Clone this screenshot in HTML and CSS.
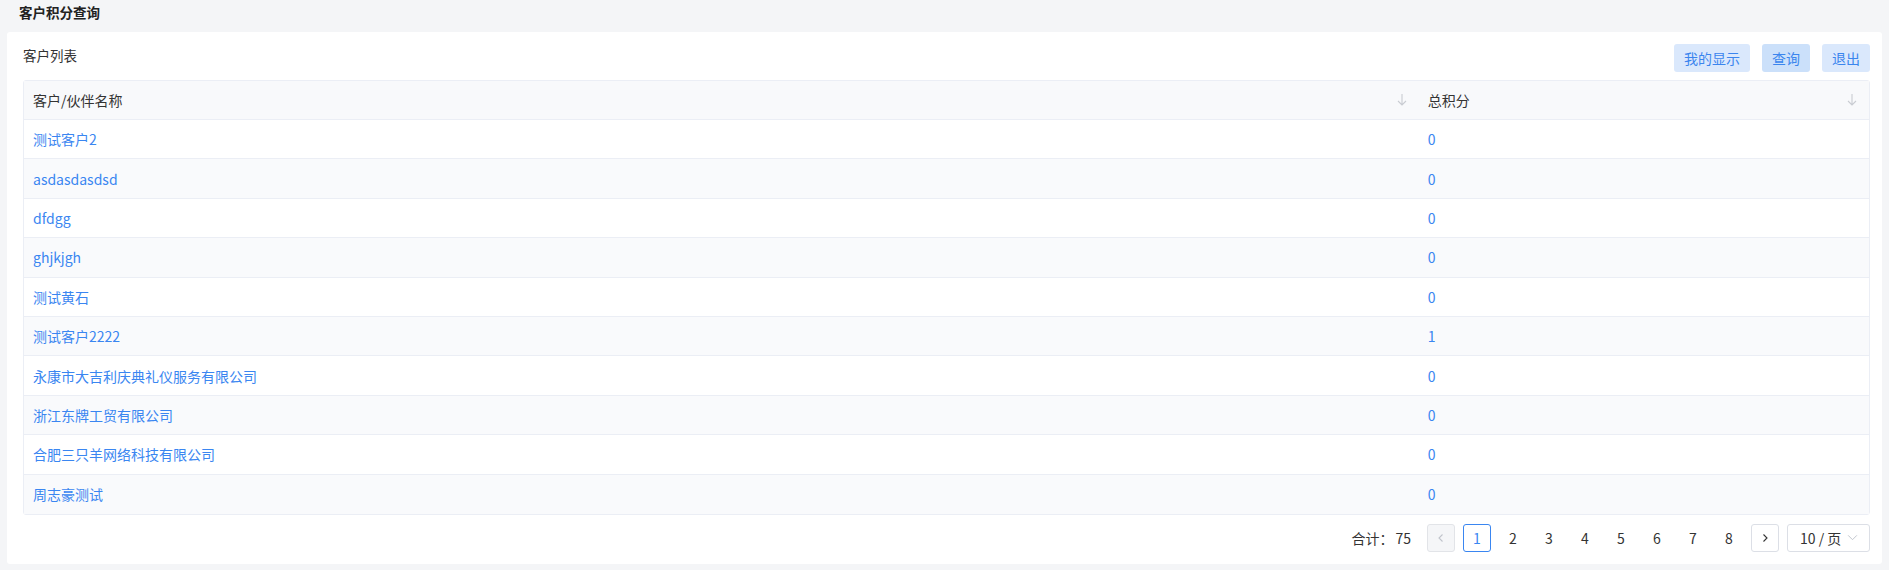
FILE: index.html
```html
<!DOCTYPE html>
<html lang="zh-CN">
<head>
<meta charset="utf-8">
<title>客户积分查询</title>
<link rel="stylesheet" href="styles.css">
</head>
<body>
<div class="page-title">客户积分查询</div>
<div class="card">
  <div class="toolbar">
    <div class="list-title">客户列表</div>
    <div class="actions">
      <button class="btn">我的显示</button>
      <button class="btn btn-active">查询</button>
      <button class="btn">退出</button>
    </div>
  </div>
  <div class="table">
    <div class="row head">
      <div class="cell">客户/伙伴名称<svg class="sort" viewBox="0 0 12 14"><path d="M6 1v11M2 8l4 4 4-4"/></svg></div>
      <div class="cell">总积分<svg class="sort" viewBox="0 0 12 14"><path d="M6 1v11M2 8l4 4 4-4"/></svg></div>
    </div>
    <div class="row"><div class="cell link">测试客户2</div><div class="cell link">0</div></div>
    <div class="row"><div class="cell link">asdasdasdsd</div><div class="cell link">0</div></div>
    <div class="row"><div class="cell link">dfdgg</div><div class="cell link">0</div></div>
    <div class="row"><div class="cell link">ghjkjgh</div><div class="cell link">0</div></div>
    <div class="row"><div class="cell link">测试黄石</div><div class="cell link">0</div></div>
    <div class="row"><div class="cell link">测试客户2222</div><div class="cell link">1</div></div>
    <div class="row"><div class="cell link">永康市大吉利庆典礼仪服务有限公司</div><div class="cell link">0</div></div>
    <div class="row"><div class="cell link">浙江东牌工贸有限公司</div><div class="cell link">0</div></div>
    <div class="row"><div class="cell link">合肥三只羊网络科技有限公司</div><div class="cell link">0</div></div>
    <div class="row"><div class="cell link">周志豪测试</div><div class="cell link">0</div></div>
  </div>
  <div class="pager">
    <span class="total">合计：<span class="total-num">75</span></span>
    <span class="pg-btn disabled"><svg viewBox="0 0 10 10"><path d="M6.5 1.5 3 5l3.5 3.5"/></svg></span>
    <span class="pg-num current">1</span>
    <span class="pg-num">2</span>
    <span class="pg-num">3</span>
    <span class="pg-num">4</span>
    <span class="pg-num">5</span>
    <span class="pg-num">6</span>
    <span class="pg-num">7</span>
    <span class="pg-num">8</span>
    <span class="pg-btn"><svg viewBox="0 0 10 10"><path d="M3.5 1.5 7 5 3.5 8.5"/></svg></span>
    <span class="pg-size">10 / 页<svg viewBox="0 0 12 8"><path d="M1 1.5l5 5 5-5"/></svg></span>
  </div>
</div>
</body>
</html>
```
FILE: styles.css
```css
* { box-sizing: border-box; }
html, body { margin: 0; padding: 0; }
body {
  background: #f4f5f7;
  font-family: "Noto Sans CJK SC", "Noto Sans", sans-serif;
  font-size: 14px;
  color: #333;
  height: 570px;
  overflow: hidden;
}
.page-title {
  height: 32px;
  line-height: 25px;
  padding-left: 19px;
  font-weight: bold;
  font-size: 13.5px;
  color: #222;
}
.card {
  background: #fff;
  margin: 0 7px 0 7px;
  border-radius: 3px;
  padding: 12px 12px 12px 16px;
}
.toolbar {
  display: flex;
  justify-content: space-between;
  align-items: flex-start;
  height: 28px;
  margin-bottom: 8px;
}
.list-title {
  line-height: 22px;
  font-size: 13.5px;
  color: #333;
}
.actions { display: flex; gap: 12px; }
.btn {
  height: 28px;
  border: none;
  border-radius: 3px;
  background: #dae8fc;
  color: #3a85ee;
  font-family: inherit;
  font-size: 14px;
  padding: 0 10px;
  line-height: 28px;
}
.btn-active { background: #cbe0fa; }
.table {
  border: 1px solid #ebeef5;
  border-radius: 3px;
}
.row {
  display: grid;
  grid-template-columns: 75.6% 1fr;
  height: 39.4px;
  border-bottom: 1px solid #ebeef5;
  background: #fff;
}
.row:nth-child(odd) { background: #f9fafc; }
.row:last-child { border-bottom: none; }
.row.head {
  height: 39px;
  background: #f8f9fb;
  color: #333;
}
.cell {
  display: flex;
  align-items: center;
  justify-content: space-between;
  padding: 0 11px 0 9px;
  white-space: nowrap;
}
.link { color: #3a86f1; }
.sort {
  width: 12px;
  height: 14px;
  fill: none;
  stroke: #c9ccd2;
  stroke-width: 1.1;
}
.pager {
  display: flex;
  justify-content: flex-end;
  align-items: center;
  gap: 8px;
  margin-top: 9px;
  height: 28px;
}
.total { margin-right: 8px; color: #333; }
.total-num { margin-left: 2px; }
.pg-btn, .pg-num {
  width: 28px;
  height: 28px;
  display: flex;
  align-items: center;
  justify-content: center;
  border-radius: 3px;
  color: #333;
}
.pg-btn {
  border: 1px solid #dcdfe6;
  background: #fff;
}
.pg-btn svg { width: 10px; height: 10px; fill: none; stroke: #333; stroke-width: 1.1; }
.pg-btn.disabled { background: #f5f6f8; border-color: #e2e4e8; }
.pg-btn.disabled svg { stroke: #c0c4cc; }
.pg-num.current {
  border: 1px solid #3a86f1;
  color: #3a86f1;
}
.pg-size {
  width: 83px;
  height: 28px;
  border: 1px solid #dcdfe6;
  border-radius: 3px;
  display: flex;
  align-items: center;
  padding-left: 12px;
  gap: 4px;
  color: #333;
}
.pg-size svg { width: 11px; height: 7px; fill: none; stroke: #c0c4cc; stroke-width: 1.1; margin-left: 2px; }
```
